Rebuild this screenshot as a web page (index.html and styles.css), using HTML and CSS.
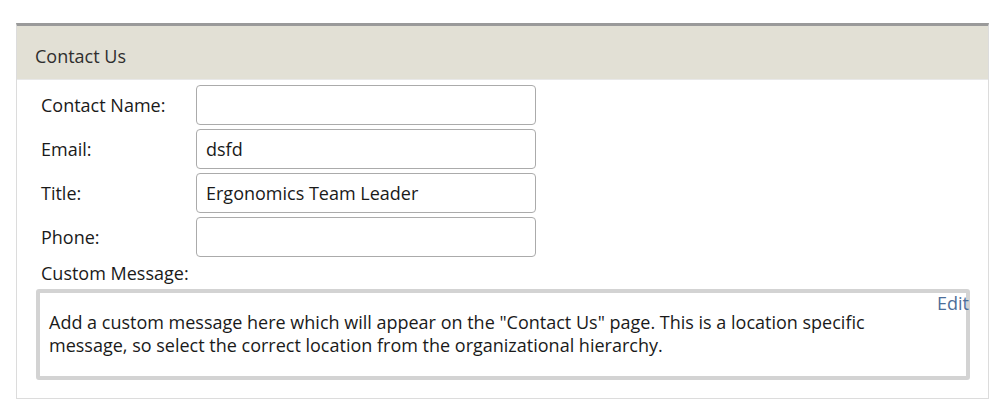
FILE: index.html
```html
<!DOCTYPE html>
<html>
<head>
<meta charset="utf-8">
<link rel="stylesheet" href="styles.css">
</head>
<body>
<div class="panel">
  <div class="panel-head">Contact Us</div>
  <div class="panel-body">
    <div class="row"><label class="lbl">Contact Name:</label><div class="field"></div></div>
    <div class="row"><label class="lbl">Email:</label><div class="field">dsfd</div></div>
    <div class="row"><label class="lbl">Title:</label><div class="field">Ergonomics Team Leader</div></div>
    <div class="row"><label class="lbl">Phone:</label><div class="field"></div></div>
    <div class="msg-label">Custom Message:</div>
    <div class="msg-box">
      <a class="edit">Edit</a>
      <p class="msg-text">Add a custom message here which will appear on the "Contact Us" page. This is a location specific message, so select the correct location from the organizational hierarchy.</p>
    </div>
  </div>
</div>
</body>
</html>
```
FILE: styles.css
```css
html, body { margin: 0; padding: 0; background: #fff; }
body {
  font-family: "Open Sans", "DejaVu Sans", sans-serif;
  font-size: 18px;
  color: #1a1a1a;
  padding: 23px 6px 0 16px;
}
.panel {
  width: 973px;
  border: 1px solid #dcdcdc;
  border-top: 3px solid #9a9a9a;
  height: 376px;
  box-sizing: border-box;
}
.panel-head {
  background: #e2e0d5;
  height: 54px;
  line-height: 50px;
  padding-left: 18px;
  padding-top: 5px;
  color: #2e2e2e;
  font-size: 18px;
  border-bottom: 1px solid #e8e8e8;
  box-sizing: border-box;
}
.panel-body {
  padding: 5px 0 0 19px;
}
.row {
  display: flex;
  align-items: center;
  height: 40px;
  margin-bottom: 4px;
}
.lbl {
  width: 160px;
  padding-left: 5px;
  box-sizing: border-box;
}
.field {
  width: 340px;
  height: 40px;
  box-sizing: border-box;
  border: 1px solid #ababab;
  border-radius: 4px;
  padding-left: 9px;
  line-height: 38px;
}
.msg-label {
  padding-left: 5px;
  line-height: 24px;
  margin-top: 1px;
}
.msg-box {
  position: relative;
  width: 934px;
  height: 91px;
  box-sizing: border-box;
  border: 4px solid #d3d3d3;
  border-radius: 3px;
  margin-top: 4px;
  padding: 18px 80px 0 9px;
}
.edit {
  position: absolute;
  right: -3px;
  top: -2px;
  color: #4d6e99;
  font-size: 18px;
}
.msg-text {
  margin: 0;
  line-height: 23px;
}
```
